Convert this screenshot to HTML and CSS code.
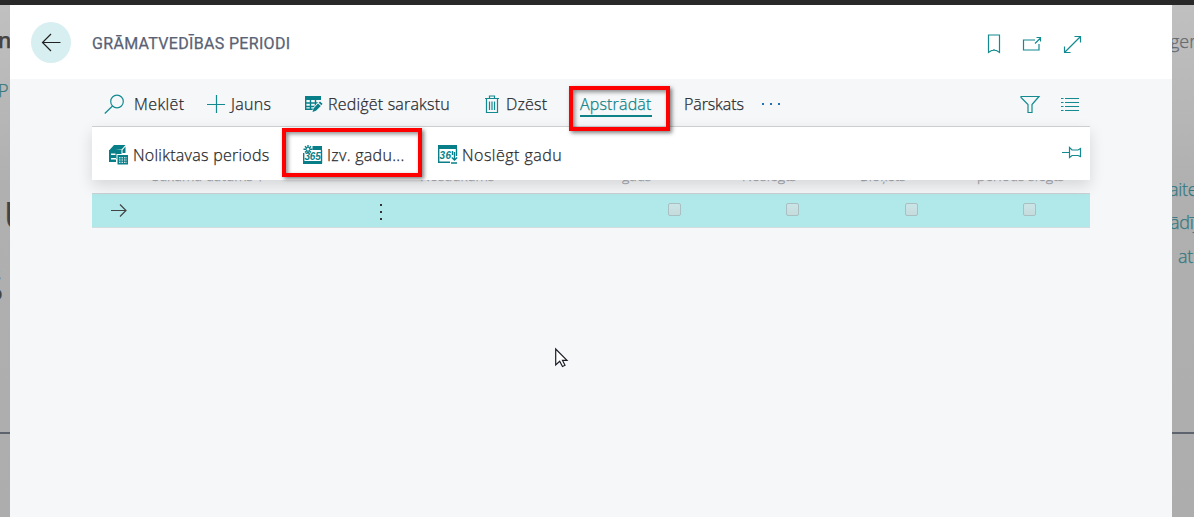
FILE: index.html
```html
<!DOCTYPE html>
<html lang="lv">
<head>
<meta charset="utf-8">
<title>Grāmatvedības periodi</title>
<link rel="stylesheet" href="styles.css">
</head>
<body>
<div class="topbar"></div>
<div class="workspace">
  <aside class="backdrop left">
    <span class="bd n">n</span><span class="bd p">P</span><span class="bd u">U</span><span class="bd s">s</span><span class="bd o">o</span><span class="bd dot">.</span>
    <i class="rule"></i>
  </aside>
  <main class="dialog">
    <header class="head">
      <button class="back" aria-label="Atpakaļ"><svg width="20" height="20" viewBox="0 0 20 20"><path d="M19.5 10.5H1.5M10 2L1.5 10.5L10 19"/></svg></button>
      <h1>GRĀMATVEDĪBAS PERIODI</h1>
      <div class="head-icons">
        <svg width="14" height="20" viewBox="0 0 14 20"><path d="M1.5 1H12.5V18.5L9.5 16.5H8L7 15.8L6 16.5H4.5L1.5 18.5Z"/></svg>
        <svg width="20" height="16" viewBox="0 0 20 16"><path d="M13 4H1.5V14H17V8M13 7.500L18.500 2M14.500 1.500H18.500V5.500"/></svg>
        <svg width="19" height="19" viewBox="0 0 19 19"><path d="M1.500 17.500L17.500 1.500M11.500 1.500H17.500V7.500M1.500 11.500V17.500H7.500"/></svg>
      </div>
    </header>
    <nav class="toolbar">
      <a class="cmd search"><svg width="21" height="21" viewBox="0 0 21 21"><circle cx="13" cy="7.500" r="6.300"/><path d="M8.500 12L.800 19.500"/></svg><span>Meklēt</span></a>
      <a class="cmd new"><svg width="18" height="18" viewBox="0 0 18 18"><path d="M0 9.500H18M9.500 0V18"/></svg><span>Jauns</span></a>
      <a class="cmd edit"><svg class="solid" width="18" height="18" viewBox="0 0 18 18"><path d="M0 1H16V5H0Z"/><path class="line" d="M.700 4V14.300H8M0 8H14M0 11.500H10M5.500 5V14M10.500 5V11"/><path class="halo" d="M7 17.500L8 13L14 6L18 9L11 16Z"/><path d="M7.500 17L8.500 13.500L13 8.500L15.800 11L11 15.800ZM13.700 7.800L15 6.500L17.500 8.800L16.400 10.200Z"/></svg><span>Rediģēt sarakstu</span></a>
      <a class="cmd delete"><svg width="14" height="19" viewBox="0 0 14 19"><path d="M0 3.500H14M4.500 3V1H9.500V3M1.500 4V17.500H12.500V4M4.500 6.500V15M7 6.500V15M9.500 6.500V15"/></svg><span>Dzēst</span></a>
      <a class="cmd process"><span>Apstrādāt</span></a>
      <a class="cmd report"><span>Pārskats</span></a>
      <i class="more"><b></b><b></b><b></b></i>
      <svg class="filter" width="20" height="19" viewBox="0 0 20 19"><path d="M1 1.500H19L12 9.500V17.500H8V9.500L1 2.500Z"/></svg>
      <svg class="list" width="19" height="14" viewBox="0 0 19 14"><path d="M0 1.500H2.500M4 1.500H18M0 5.500H2.500M4 5.500H18M0 9.500H2.500M4 9.500H18M0 13.500H2.500M4 13.500H18"/></svg>
    </nav>
    <section class="menu">
      <a class="cmd stock"><svg class="solid" width="20" height="20" viewBox="0 0 20 20"><path d="M0 5.500L5 0H16.500L12.500 4.500ZM13.500 5L16.500 1.500V8H13.500ZM0 5H12.500V9H8V14H0Z"/><path class="light" d="M2 8.500H6.500V10H2Z"/><path d="M0 13H7V17H0Z"/><path class="light" d="M2 13H7V14.500H2ZM7.500 9H20V20H7.500Z"/><path d="M8.500 10H19V19.500H8.500Z"/><path class="dash" d="M10 12.800H18M10 15H18M10 17.300H18"/></svg><span>Noliktavas periods</span></a>
      <a class="cmd create"><svg class="solid" width="20" height="20" viewBox="0 0 20 20"><path d="M9.500 1H19V5H9.500Z"/><path class="line" d="M18.500 5V18.500M.700 8V19M5 0V8.500M.500 4.300H9.500M2 1.200L8 7.400M8 1.200L2 7.400"/><circle cx="5" cy="4.300" r="1.300" class="hole"/><path d="M0 16H19V19H0Z"/><text x="1.500" y="14.800" textLength="16.500">365</text></svg><span>Izv. gadu...</span></a>
      <a class="cmd close"><svg class="solid" width="20" height="20" viewBox="0 0 20 20"><path d="M0 0H19V4H0Z"/><path class="line" d="M.700 4V17.200H12M18.500 4V11"/><text x="1.500" y="14" textLength="12">36</text><path class="line" d="M14.500 6V10M16.500 7V15M13.800 12.500L16.500 15L19.200 12.500M13 18H19"/></svg><span>Noslēgt gadu</span></a>
      <svg class="pin" width="20" height="12" viewBox="0 0 20 12"><path d="M0 5.500H7M7.500 .500V10.500L10 8.500H16L18.500 9.500V1.500L16 3H10Z"/></svg>
    </section>
    <section class="grid">
      <div class="columns"><span>Sākuma datums ↑</span><span>Nosaukums</span><span>gads</span><span>Noslēgts</span><span>Bloķēts</span><span>periods slēgts</span></div>
      <div class="row">
        <svg class="arrow" width="16" height="14" viewBox="0 0 16 14"><path d="M0 6.500H15M9 .500L15 6.500L9 12.500"/></svg>
        <i class="kebab"><b></b><b></b><b></b></i>
        <i class="check"></i><i class="check"></i><i class="check"></i><i class="check"></i>
      </div>
    </section>
    <div class="mark mark-process"></div>
    <div class="mark mark-create"></div>
    <svg class="cursor" width="13" height="20" viewBox="0 0 13 20"><path d="M.700 1V17L4.700 13.300L7.500 18.500L10 17.300L7.500 12.400H12Z"/></svg>
  </main>
  <aside class="backdrop right">
    <span class="bd ger">ger</span><span class="bd teal t1">aite</span><span class="bd teal t2">ādīj</span><span class="bd teal t3">at</span>
    <i class="rule"></i>
  </aside>
</div>
</body>
</html>
```
FILE: styles.css
```css
* { box-sizing: border-box; }
body { margin: 0; width: 1194px; height: 517px; overflow: hidden; font: 300 16px/22px "Open Sans", "Noto Sans", sans-serif; color: #28292c; -webkit-text-stroke: .25px; }
svg { display: block; flex: none; fill: none; stroke: #138a90; stroke-width: 1.2; overflow: visible; }
span { white-space: nowrap; }
.topbar { height: 5px; background: #292929; }
.workspace { display: grid; grid-template-columns: 10px 1162px 22px; height: 512px; }

.backdrop { position: relative; overflow: hidden; background: linear-gradient(#c0c0c0, #b0b0b0 35%, #adadad); }
.bd { position: absolute; font-size: 18px; line-height: 24px; color: #444; }
.n { left: -2px; top: 23px; font-size: 21px; font-weight: 600; }
.p { left: -2px; top: 73px; color: #377a7f; }
.u { left: 4px; top: 180px; font-size: 37px; line-height: 60px; font-weight: 600; }
.s { left: -8px; top: 257px; font-size: 19px; }
.o { left: -10px; top: 276px; font-size: 20px; font-weight: 700; }
.dot { left: -4px; top: 461px; }
.ger { left: -2px; top: 24px; color: #666a71; }
.teal { color: #347980; font-size: 18px; letter-spacing: -.3px; }
.t1 { left: -3px; top: 172px; }
.t2 { left: -2px; top: 205px; }
.t3 { left: 6px; top: 239px; }
.rule { position: absolute; left: 0; right: 0; top: 427px; height: 2px; background: #5e646d; }

.dialog { position: relative; background: #f5f7f9; }
.head { height: 74px; background: #fff; display: flex; align-items: center; padding-left: 21px; }
.back { width: 40px; height: 41px; padding: 0; border: 0; border-radius: 50%; background: #d8eff1; display: grid; place-items: center; }
.back svg { stroke: #222; }
h1 { margin: 3px 0 0 21px; width: 199px; font: 400 16px/22px Roboto, sans-serif; color: #596274; letter-spacing: .32px; white-space: nowrap; }
.head-icons { margin-left: 696px; padding-top: 4px; display: flex; align-items: center; gap: 21px; }

.cmd { display: flex; align-items: center; flex: none; }
.cmd span { flex: none; }
.toolbar { height: 47px; margin: 0 82px; padding: 3px 0 0 12px; display: flex; align-items: center; }
.search { width: 103px; gap: 9px; letter-spacing: .4px; }
.new { width: 98px; gap: 6px; letter-spacing: .3px; }
.edit { width: 180px; gap: 5px; letter-spacing: .2px; }
.delete { width: 95px; gap: 7px; letter-spacing: .2px; }
.process { width: 104px; letter-spacing: .17px; color: #0e8287; }
.process span { border-bottom: 2px solid #0e8287; line-height: 22px; padding-top: 2px; }
.report { width: 78px; letter-spacing: -.1px; }
.more { display: flex; gap: 6px; }
.more b { width: 2px; height: 2px; background: #2470b5; }
.filter { margin-left: auto; }
.list { margin: 0 10px 0 21px; }

.solid { fill: #087f88; stroke: none; }
.solid .line { fill: none; stroke: #087f88; stroke-width: 1.4; }
.light, .hole { fill: #fff; }
.halo { fill: #f5f7f9; }
.dash { stroke: #fff; stroke-width: 1; stroke-dasharray: 1.500 1; }
.solid text { font: italic 700 10px "Liberation Sans", sans-serif; fill: #087f88; }
.menu { position: relative; z-index: 2; height: 54px; margin: 0 82px; background: #fff; border-top: 1px solid #ccced0; display: flex; align-items: center; padding: 2px 8px 0 17px; box-shadow: 0 6px 14px rgba(0,0,0,.13); }
.stock { width: 194px; gap: 4px; letter-spacing: .27px; }
.create { width: 135px; gap: 4px; letter-spacing: .3px; }
.close { gap: 4px; letter-spacing: .48px; }
.pin { margin-left: auto; margin-top: -3px; }

.grid { margin: -10px 82px 0; }
.columns { height: 24px; padding-left: 60px; display: grid; grid-template-columns: 268px 202px 120px 118px 117px 100px; font-size: 14px; line-height: 11px; color: #a0a2aa; border-bottom: 1px solid #ccd1d4; }
.row { height: 34px; background: #b1e9eb; border-bottom: 1px solid #d2dddf; display: flex; align-items: center; padding-left: 19px; }
.arrow { stroke: #444; margin-top: 1px; }
.kebab { display: grid; gap: 5px; width: 2px; margin: 3px 286px 0 253px; }
.kebab b { width: 2px; height: 2px; background: #333; }
.check { width: 13px; height: 13px; flex: none; border: 1px solid #a9bfc1; border-radius: 2px; background: linear-gradient(#cbe5e6, #c5dbdc); margin: -2px 105.300px 0 0; }

.mark { position: absolute; z-index: 3; border: 4px solid #f00; box-shadow: 2px 2px 4px rgba(0,0,0,.5), inset 2px 2px 4px rgba(0,0,0,.45); }
.mark-process { left: 559px; top: 81px; width: 101px; height: 45px; }
.mark-create { left: 272px; top: 123px; width: 140px; height: 49px; }
.cursor { position: absolute; left: 545px; top: 343px; fill: #fff; stroke: #1d1d28; }
```
